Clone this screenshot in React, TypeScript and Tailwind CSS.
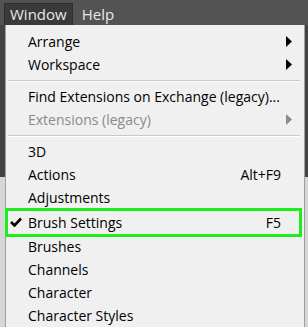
import React from 'react';

type Item = {
    label?: string;
    shortcut?: string;
    submenu?: boolean;
    disabled?: boolean;
    checked?: boolean;
    highlight?: boolean;
    separator?: boolean;
};

const items: Item[] = [
    { label: 'Arrange', submenu: true },
    { label: 'Workspace', submenu: true },
    { separator: true },
    { label: 'Find Extensions on Exchange (legacy)...' },
    { label: 'Extensions (legacy)', submenu: true, disabled: true },
    { separator: true },
    { label: '3D' },
    { label: 'Actions', shortcut: 'Alt+F9' },
    { label: 'Adjustments' },
    { label: 'Brush Settings', shortcut: 'F5', checked: true, highlight: true },
    { label: 'Brushes' },
    { label: 'Channels' },
    { label: 'Character' },
    { label: 'Character Styles' },
];

const Arrow = ({ disabled }: { disabled?: boolean }) => (
    <svg width="6" height="11" viewBox="0 0 6 11" className="shrink-0">
        <path d="M0 0 L6 5.5 L0 11 Z" fill={disabled ? '#8a8a8a' : '#000'} />
    </svg>
);

const Check = () => (
    <svg width="12" height="10" viewBox="0 0 12 10">
        <path d="M1 5 L4.5 8.5 L11 1.5" fill="none" stroke="#000" strokeWidth="2.6" />
    </svg>
);

export default function App() {
    return (
        <div
            className="relative w-[308px] h-[327px] overflow-hidden bg-[#e6e6e6]"
            style={{ fontFamily: '"Open Sans", "Noto Sans", sans-serif' }}
        >
            {/* app background behind the menu */}
            <div className="flex flex-col h-full">
                <div className="h-[25px] bg-[#535353] flex items-end pl-1 gap-[7px] text-[15px] text-[#e8e8e8]">
                    <div className="h-[22px] px-[5px] flex items-center bg-[#3a3a3a] border border-[#2e2e2e] border-b-0">Window</div>
                    <div className="h-[22px] px-[2px] flex items-center">Help</div>
                </div>
                <div className="h-[152px] bg-[#434343]" />
                <div className="flex-1 bg-[#d6d6d6]" />
            </div>

            {/* dropdown */}
            <div className="absolute left-[5px] top-[25px] w-[300px] h-[310px] bg-[#f0f0f0] border-l border-r border-[#a0a0a0] pt-[5px] text-[14px] text-black">
                {items.map((it, i) =>
                    it.separator ? (
                        <div key={i} className="h-[9px] flex items-center pl-[2px] pr-[4px]">
                            <div className="w-full h-[2px] border-t border-[#c9c9c9] border-b border-b-white" />
                        </div>
                    ) : (
                        <div
                            key={i}
                            className={
                                'flex items-center pl-[22px] pr-[12px] ' +
                                (it.highlight ? 'relative h-[26px] pt-[1px]' : 'h-[23px]')
                            }
                        >
                            {it.highlight && (
                                <div className="absolute left-[-1px] right-[2px] top-[-1px] bottom-[-2px] border-[3px] border-[#1ded1d]" />
                            )}
                            {it.checked && (
                                <div className="absolute left-[4px] top-[8px]">
                                    <Check />
                                </div>
                            )}
                            <span className={'flex-1 whitespace-nowrap ' + (it.disabled ? 'text-[#8a8a8a]' : '')}>{it.label}</span>
                            {it.shortcut && <span className="mr-[11px]">{it.shortcut}</span>}
                            {it.submenu && <Arrow disabled={it.disabled} />}
                        </div>
                    )
                )}
            </div>
        </div>
    );
}
